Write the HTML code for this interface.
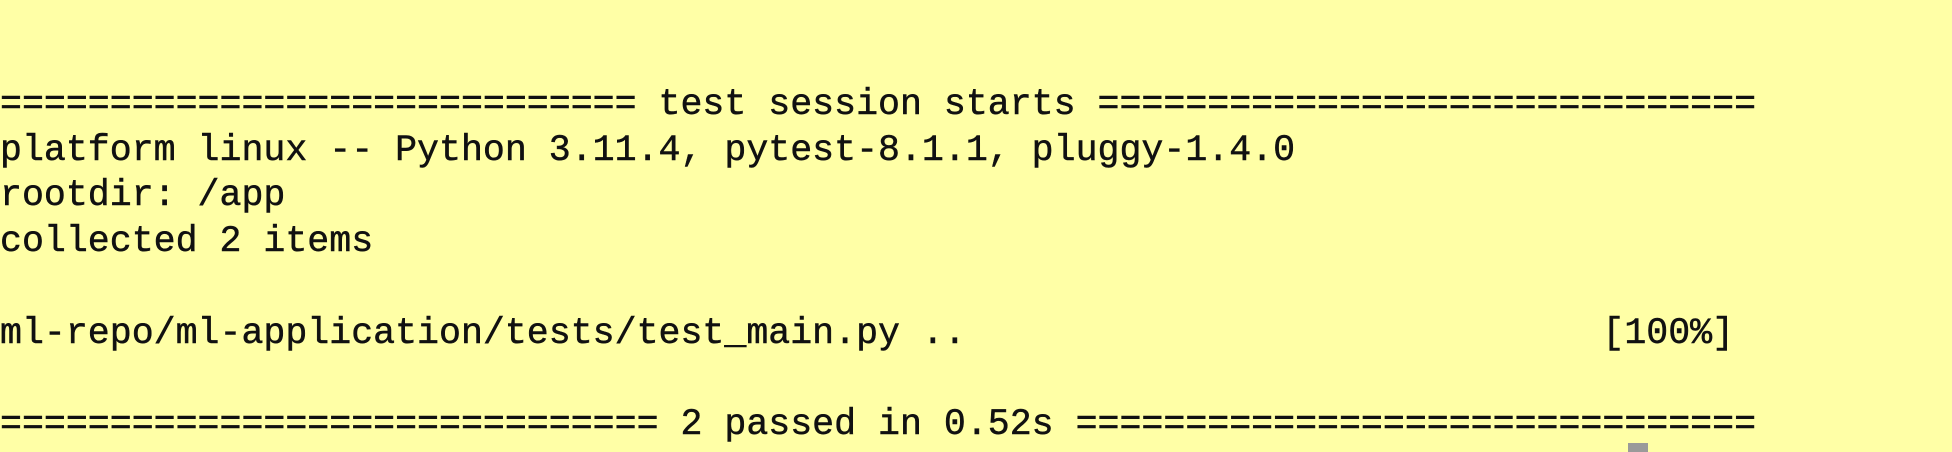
<!DOCTYPE html>
<html><head><style>
html,body{margin:0;padding:0;}
body{width:1952px;height:452px;background:#ffffa6;overflow:hidden;position:relative;}
pre{margin:0;position:absolute;left:0;top:82px;font-family:"Liberation Mono",monospace;font-size:36.6px;line-height:45.7px;color:#111;-webkit-text-stroke:0.5px #111;}
.c{position:absolute;left:1628px;top:443px;width:20px;height:9px;background:#9a9a9a;}
</style></head><body>
<pre>============================= test session starts ==============================
platform linux -- Python 3.11.4, pytest-8.1.1, pluggy-1.4.0
rootdir: /app
collected 2 items

ml-repo/ml-application/tests/test_main.py ..                             [100%]

============================== 2 passed in 0.52s ===============================</pre>
<div class="c"></div>
</body></html>
